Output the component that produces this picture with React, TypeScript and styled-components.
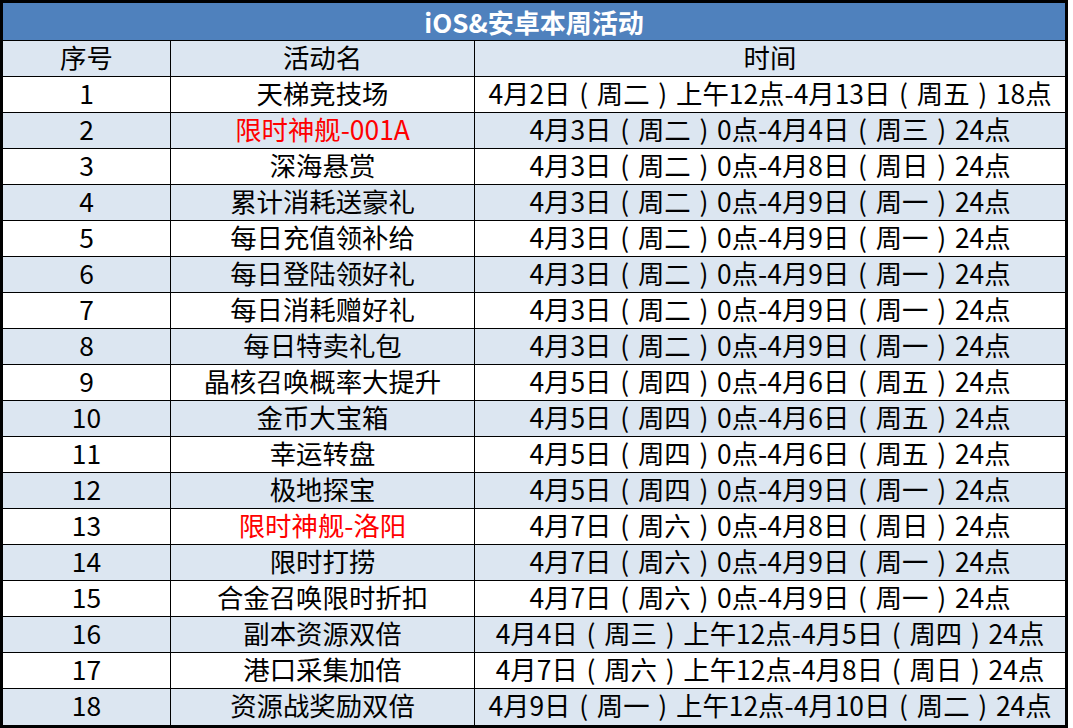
import React from "react";
import styled, { createGlobalStyle } from "styled-components";

const Global = createGlobalStyle`
  html, body { margin: 0; padding: 0; background: #ffffff; }
  body { font-family: "Noto Sans CJK SC", "Noto Sans", sans-serif; }
`;

const Table = styled.div`
  width: 1068px;
  box-sizing: border-box;
  border: 3px solid #000;
  display: flex;
  flex-direction: column;
  color: #000;
`;

const Title = styled.div`
  height: 38px;
  box-sizing: border-box;
  border-bottom: 1px solid #000;
  background: #4f81bd;
  color: #fff;
  font-weight: bold;
  font-size: 26px;
  line-height: 1;
  display: flex;
  align-items: center;
  justify-content: center;
`;

const Row = styled.div<{ $shade: boolean; $last?: boolean }>`
  display: grid;
  grid-template-columns: 168px 304px 1fr;
  height: 36px;
  box-sizing: border-box;
  border-bottom: ${(p) => (p.$last ? "none" : "1px solid #000")};
  background: ${(p) => (p.$shade ? "#dce6f1" : "#ffffff")};
`;

const Cell = styled.div<{ $red?: boolean; $end?: boolean }>`
  display: flex;
  align-items: center;
  justify-content: center;
  box-sizing: border-box;
  border-right: ${(p) => (p.$end ? "none" : "1px solid #000")};
  font-size: 26.4px;
  line-height: 1;
  padding-bottom: 3px;
  white-space: pre;
  color: ${(p) => (p.$red ? "#ff0000" : "#000")};
`;

const Paren = styled.span`
  display: inline-block;
  width: 1em;
  text-align: center;
`;

const rows: [string, string, boolean?][] = [
  ["天梯竞技场", "4月2日（周二）上午12点-4月13日（周五）18点"],
  ["限时神舰-001A", "4月3日（周二）0点-4月4日（周三）24点", true],
  ["深海悬赏", "4月3日（周二）0点-4月8日（周日）24点"],
  ["累计消耗送豪礼", "4月3日（周二）0点-4月9日（周一）24点"],
  ["每日充值领补给", "4月3日（周二）0点-4月9日（周一）24点"],
  ["每日登陆领好礼", "4月3日（周二）0点-4月9日（周一）24点"],
  ["每日消耗赠好礼", "4月3日（周二）0点-4月9日（周一）24点"],
  ["每日特卖礼包", "4月3日（周二）0点-4月9日（周一）24点"],
  ["晶核召唤概率大提升", "4月5日（周四）0点-4月6日（周五）24点"],
  ["金币大宝箱", "4月5日（周四）0点-4月6日（周五）24点"],
  ["幸运转盘", "4月5日（周四）0点-4月6日（周五）24点"],
  ["极地探宝", "4月5日（周四）0点-4月9日（周一）24点"],
  ["限时神舰-洛阳", "4月7日（周六）0点-4月8日（周日）24点", true],
  ["限时打捞", "4月7日（周六）0点-4月9日（周一）24点"],
  ["合金召唤限时折扣", "4月7日（周六）0点-4月9日（周一）24点"],
  ["副本资源双倍", "4月4日（周三）上午12点-4月5日（周四）24点"],
  ["港口采集加倍", "4月7日（周六）上午12点-4月8日（周日）24点"],
  ["资源战奖励双倍", "4月9日（周一）上午12点-4月10日（周二）24点"],
];

function TimeText({ text }: { text: string }) {
  const parts = text.split(/([（）])/);
  return (
    <>
      {parts.map((p, i) =>
        p === "（" ? (
          <Paren key={i}>(</Paren>
        ) : p === "）" ? (
          <Paren key={i}>)</Paren>
        ) : (
          <React.Fragment key={i}>{p}</React.Fragment>
        )
      )}
    </>
  );
}

export default function App() {
  return (
    <>
      <Global />
      <Table>
        <Title>iOS&amp;安卓本周活动</Title>
        <Row $shade>
          <Cell>序号</Cell>
          <Cell>活动名</Cell>
          <Cell $end>时间</Cell>
        </Row>
        {rows.map(([name, time, red], i) => (
          <Row key={i} $shade={i % 2 === 1} $last={i === rows.length - 1}>
            <Cell>{i + 1}</Cell>
            <Cell $red={red}>{name}</Cell>
            <Cell $end>
              <TimeText text={time} />
            </Cell>
          </Row>
        ))}
      </Table>
    </>
  );
}
